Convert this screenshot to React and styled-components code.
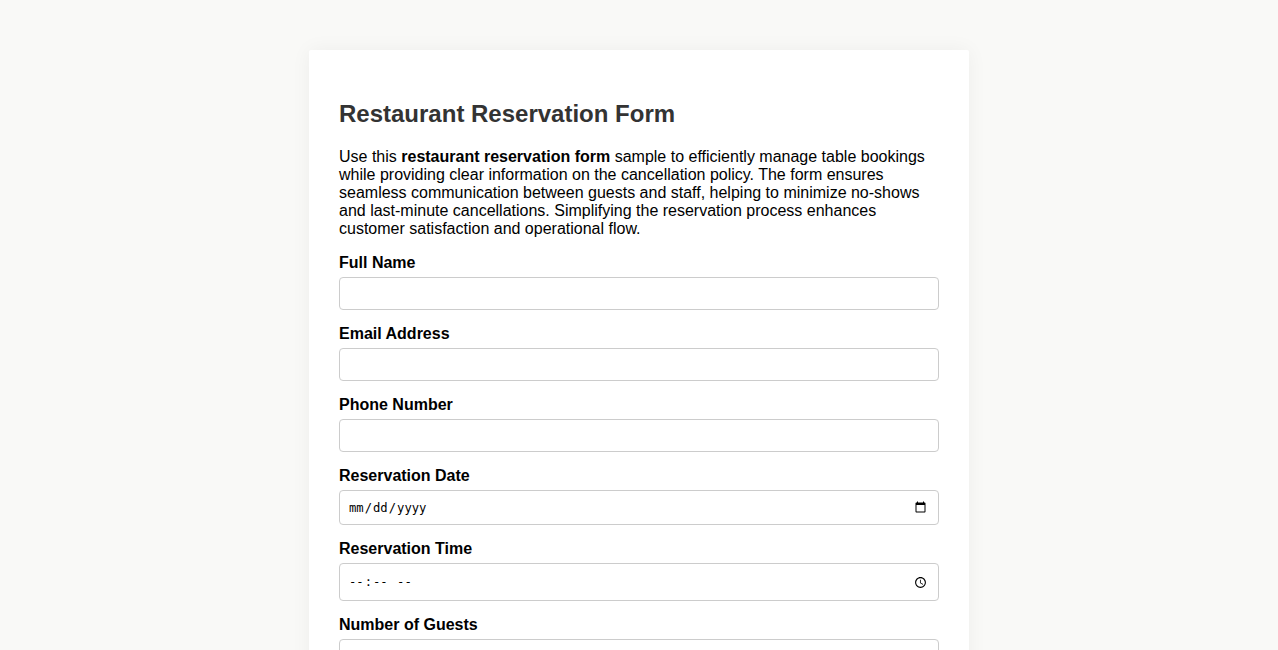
import styled, { createGlobalStyle } from 'styled-components';

const GlobalStyle = createGlobalStyle`
  html, body {
    margin: 0;
    padding: 0;
    background: #f9f9f7;
    font-family: "Liberation Sans", Arial, sans-serif;
  }
`;

const Card = styled.main`
  box-sizing: border-box;
  width: 660px;
  margin: 50px auto;
  padding: 30px;
  background: #fff;
  border-radius: 2px;
  box-shadow: 0 0 20px rgba(0, 0, 0, 0.05);
`;

const Title = styled.h1`
  margin: 20px 0;
  color: #333;
  font-size: 24px;
  line-height: 28px;
`;

const Intro = styled.p`
  margin: 0 0 16px;
  color: #000;
  font-size: 16px;
  line-height: 18px;
`;

const Label = styled.label`
  display: block;
  margin-bottom: 5px;
  color: #000;
  font-size: 16px;
  font-weight: bold;
  line-height: 18px;
`;

const Field = styled.input`
  display: block;
  box-sizing: border-box;
  width: 100%;
  margin-bottom: 15px;
  padding: 8px;
  border: 1px solid #ccc;
  border-radius: 4px;
  background: #fff;
  font-family: ${(props) => (props.$mono ? '"DejaVu Sans Mono", monospace' : 'inherit')};
  font-size: ${(props) => (props.$mono ? '12.2px' : '16px')};
  height: ${(props) => props.$height}px;

  &::-webkit-calendar-picker-indicator {
    box-sizing: content-box;
    width: 13px;
    height: 13px;
    padding: 2.6px;
  }
`;

const fields = [
  { label: 'Full Name', type: 'text', height: 33 },
  { label: 'Email Address', type: 'email', height: 33 },
  { label: 'Phone Number', type: 'tel', height: 33 },
  { label: 'Reservation Date', type: 'date', height: 35, mono: true },
  { label: 'Reservation Time', type: 'time', height: 38, mono: true },
  { label: 'Number of Guests', type: 'number', height: 33 },
];

const App = () => {
  return (
    <>
      <GlobalStyle />
      <Card>
        <Title>Restaurant Reservation Form</Title>
        <Intro>
          Use this <strong>restaurant reservation form</strong> sample to efficiently manage table
          bookings while providing clear information on the cancellation policy. The form ensures
          seamless communication between guests and staff, helping to minimize no-shows and
          last-minute cancellations. Simplifying the reservation process enhances customer
          satisfaction and operational flow.
        </Intro>
        {fields.map((field) => (
          <div key={field.label}>
            <Label>{field.label}</Label>
            <Field type={field.type} $height={field.height} $mono={field.mono} />
          </div>
        ))}
      </Card>
    </>
  );
};

export default App;
